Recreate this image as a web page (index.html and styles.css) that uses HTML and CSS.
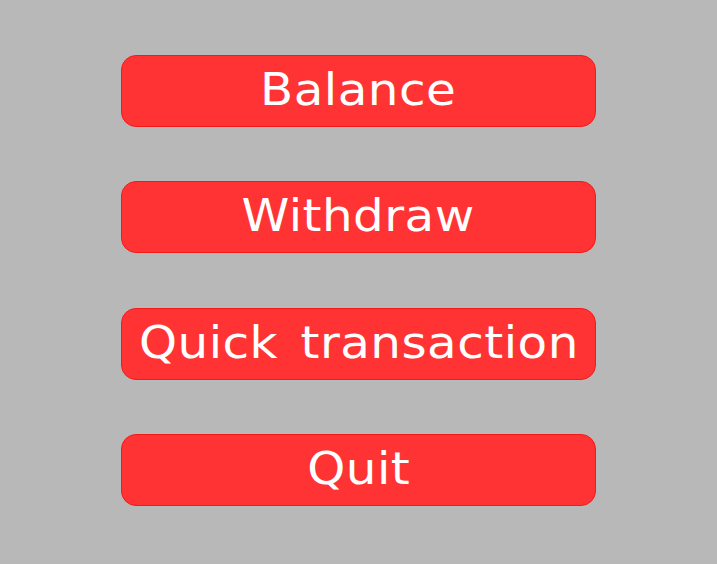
FILE: index.html
```html
<!DOCTYPE html>
<html>
<head>
<meta charset="utf-8">
<link rel="stylesheet" href="styles.css">
</head>
<body>
<div class="menu">
  <button class="btn"><span class="label">Balance</span></button>
  <button class="btn"><span class="label">Withdraw</span></button>
  <button class="btn"><span class="label">Quick transaction</span></button>
  <button class="btn"><span class="label">Quit</span></button>
</div>
</body>
</html>
```
FILE: styles.css
```css
html, body {
  margin: 0;
  padding: 0;
  background: #b8b8b8;
  width: 717px;
  height: 564px;
  overflow: hidden;
}
.menu {
  display: flex;
  flex-direction: column;
  gap: 54.33px;
  padding: 55px 0 0 121px;
}
.btn {
  box-sizing: border-box;
  display: flex;
  align-items: center;
  justify-content: center;
  width: 475px;
  height: 72px;
  margin: 0;
  padding: 0 0 2px 0;
  background: #ff3333;
  border: 1px solid #f41a1a;
  border-radius: 15px;
  color: #ffffff;
  font-family: "DejaVu Sans", Verdana, sans-serif;
  font-size: 44px;
  line-height: 1;
}
.label {
  display: inline-block;
  white-space: nowrap;
  letter-spacing: 0.4px;
  word-spacing: 6px;
  transform: scaleX(1.1);
}
```
